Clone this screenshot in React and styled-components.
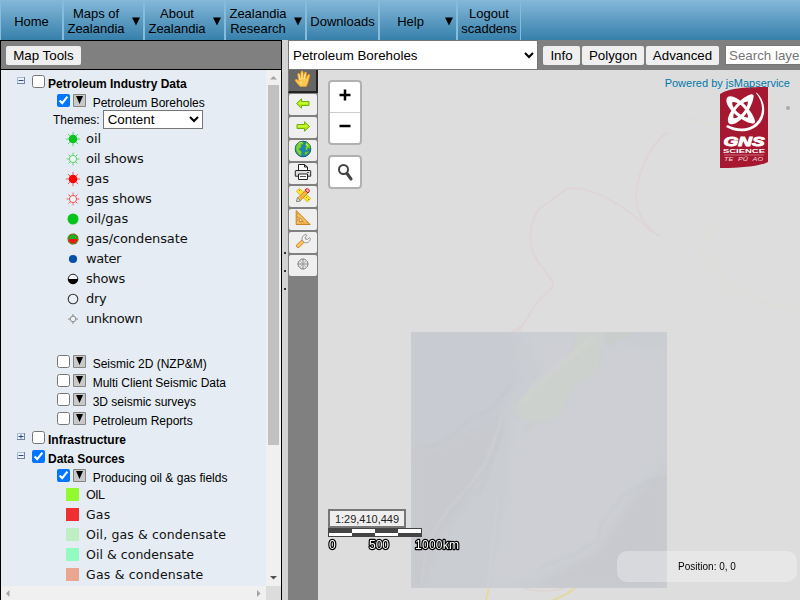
import React from "react";
import styled, { createGlobalStyle, css } from "styled-components";

const Global = createGlobalStyle`
  * { box-sizing: border-box; }
  body { margin: 0; overflow: hidden; font-family: "Liberation Sans", Arial, sans-serif; color: #000; }
`;

const Page = styled.div`
  width: 800px;
  height: 600px;
  display: flex;
  flex-direction: column;
  overflow: hidden;
`;
const Nav = styled.nav`
  height: 40px;
  flex: none;
  display: flex;
  background: linear-gradient(#85b8d9, #3680ab);
`;
const NavItem = styled.div`
  width: ${(p) => p.$w}px;
  height: 40px;
  display: flex;
  align-items: center;
  border: solid #85bcdc;
  border-width: 0 1px;
  padding: 2px 3px 0;
  font-size: 13px;
  line-height: 15px;
  text-align: center;
`;
const NavLabel = styled.span`
  flex: 1;
  white-space: nowrap;
`;
const NavArrow = styled.svg`
  flex: none;
  width: 8px;
  height: 9px;
  margin: 0 0.5px 0 6.5px;
`;
const Body = styled.div`
  flex: 1;
  display: flex;
  min-height: 0;
`;

const Side = styled.aside`
  width: 282px;
  flex: none;
  display: flex;
  flex-direction: column;
  border: solid #000;
  border-width: 1px 1px 0 1px;
  background: #e5ecf3;
`;
const SideBar = styled.div`
  height: 29px;
  flex: none;
  display: flex;
  align-items: center;
  padding-left: 5px;
  background: #808080;
  border-bottom: 1px solid #000;
`;
const Button = styled.button`
  width: ${(p) => p.$w}px;
  height: 19px;
  padding: 0;
  border: 0;
  border-radius: 2px;
  background: #efefef;
  font: 13.333px "Liberation Sans", Arial, sans-serif;
  white-space: nowrap;
`;
const TreeGrid = styled.div`
  flex: 1;
  min-height: 0;
  display: grid;
  grid-template-columns: 265px 15px;
  grid-template-rows: 516px 14px;
`;
const Tree = styled.div`
  padding-top: 3px;
  overflow: hidden;
`;
const Row = styled.div`
  height: 19px;
  display: flex;
  align-items: flex-start;
  padding: 2px 0 0 ${(p) => (p.$child ? 56 : 16)}px;
`;
const Check = styled.input.attrs({ type: "checkbox" })`
  width: 13px;
  height: 13px;
  margin: 0;
`;
const Expander = styled.svg`
  width: 8px;
  height: 8px;
  margin: 2px 7px 0 0;
`;
const Label = styled.span`
  font-size: 12px;
  line-height: 14px;
  white-space: nowrap;
  margin: 2px 0 0 ${(p) => (p.$bold ? 3 : 6.67)}px;
  font-weight: ${(p) => (p.$bold ? 700 : 400)};
`;
const DropIcon = styled.svg`
  width: 13px;
  height: 13px;
  margin-left: 3px;
`;
const Themes = styled.div`
  height: 19px;
  margin-top: -1px;
  padding-left: 52px;
  display: flex;
  align-items: center;
  gap: 3px;
  font-size: 12px;
`;
const ThemeSelect = styled.select`
  width: 100px;
  height: 19px;
  padding: 0;
  margin: 0;
  font: 13.333px "Liberation Sans", Arial, sans-serif;
  background: #fff;
  border: 1px solid #767676;
  border-radius: 0;
`;
const Legend = styled.div`
  padding-left: 62px;
  margin: ${(p) => p.$margin};
`;
const LegendRow = styled.div`
  height: 20px;
  display: flex;
  align-items: center;
  font: ${(p) => p.$size}px "DejaVu Sans", sans-serif;
  letter-spacing: ${(p) => p.$track}px;
  color: #111;
  white-space: nowrap;
`;
const LegendText = styled.span`
  padding-bottom: 2px;
`;
const Symbol = styled.svg`
  width: 20px;
  height: 20px;
  flex: none;
  margin-right: 3px;
`;
const Track = styled.div`
  display: flex;
  flex-direction: ${(p) => (p.$col ? "column" : "row")};
  align-items: center;
  justify-content: space-between;
  padding: ${(p) => (p.$col ? "4px 0 5px" : "0 4px 0 4px")};
  background: #f0f0f0;
`;
const Thumb = styled.div`
  width: 11px;
  height: 360px;
  margin: 4px 0 auto;
  background: #c1c1c1;
`;
const Tri = styled.svg`
  width: 7px;
  height: 7px;
  display: block;
  flex: none;
`;
const Corner = styled.div`
  background: #dcdcdc;
`;
const Splitter = styled.div`
  width: 6px;
  flex: none;
  display: flex;
  flex-direction: column;
  align-items: center;
  gap: 16px;
  padding-top: 212px;
  background: #d3d3d3;
`;
const Dot = styled.i`
  width: 2px;
  height: 2px;
  background: #333;
`;

const Main = styled.main`
  flex: 1;
  min-width: 0;
  display: flex;
  flex-direction: column;
`;
const TopBar = styled.div`
  height: 30px;
  flex: none;
  display: flex;
  align-items: center;
  background: #808080;
  overflow: hidden;
`;
const LayerSelect = styled.select`
  width: 250px;
  height: 30px;
  flex: none;
  margin: 0 5px 0 0;
  padding: 0;
  border: 1px solid #767676;
  border-radius: 0;
  background: #fff;
  font: 13.333px "Liberation Sans", Arial, sans-serif;
`;
const Buttons = styled.div`
  display: flex;
  gap: 2px;
  flex: none;
`;
const Search = styled.input`
  width: 160px;
  height: 20px;
  flex: none;
  margin-left: 6px;
  padding: 1px 3px;
  border: 1px solid #767676;
  font: 13.333px "Liberation Sans", Arial, sans-serif;
`;
const Work = styled.div`
  flex: 1;
  display: flex;
  min-height: 0;
`;
const Tools = styled.div`
  width: 30px;
  flex: none;
  display: flex;
  flex-direction: column;
  align-items: center;
  gap: 2px;
  background: #808080;
`;
const Tool = styled.div`
  width: 28px;
  height: 21px;
  display: flex;
  align-items: center;
  justify-content: center;
  padding-bottom: 3px;
  border-radius: 2px;
  background: #efefef;
  ${(p) =>
    p.$active &&
    css`
      width: 30px;
      height: 23px;
      background: #666;
      border: solid #222;
      border-width: 0 2px 2px 0;
      border-left: 1px solid #777;
      border-radius: 0;
      margin-bottom: -1px;
    `}
  svg { width: 18px; height: 18px; flex: none; }
`;
const Map = styled.div`
  flex: 1;
  position: relative;
  overflow: hidden;
  background: #ddd;
`;
const Terrain = styled.svg`
  position: absolute;
  inset: 0;
  width: 482px;
  height: 530px;
`;
const Control = styled.div`
  position: absolute;
  left: 10px;
  top: ${(p) => p.$top}px;
  width: 34px;
  border: 2px solid #b1b1b1;
  border-radius: 4px;
  background: #fff;
  display: flex;
  flex-direction: column;
`;
const ControlCell = styled.div`
  height: 30px;
  display: flex;
  align-items: center;
  justify-content: center;
  padding-bottom: ${(p) => p.$lift || 0}px;
  & + & { border-top: 1px solid #ccc; height: 31px; }
`;
const Powered = styled.div`
  position: absolute;
  right: 10px;
  top: 7px;
  font-size: 11px;
  line-height: 13px;
  color: #0078a8;
  white-space: nowrap;
  z-index: 1;
`;
const Logo = styled.svg`
  position: absolute;
  left: 402px;
  top: 17px;
  width: 48px;
  height: 81px;
`;
const ScaleBox = styled.div`
  position: absolute;
  left: 10px;
  top: 439px;
`;
const Ratio = styled.div`
  width: 78px;
  height: 19px;
  border: 2px solid #777;
  background: #eee;
  font-size: 11px;
  line-height: 16px;
  text-align: center;
  color: #222;
`;
const ScaleBar = styled.svg`
  display: block;
  width: 150px;
  height: 28px;
`;
const Position = styled.div`
  position: absolute;
  left: 299px;
  top: 481px;
  width: 180px;
  height: 31px;
  border-radius: 10px;
  background: rgba(255, 255, 255, 0.3);
  font-size: 10px;
  line-height: 31px;
  text-align: center;
`;

const NAV = [
  [["Home"], 63, false],
  [["Maps of", "Zealandia"], 81, true],
  [["About", "Zealandia"], 81, true],
  [["Zealandia", "Research"], 81, true],
  [["Downloads"], 73, false],
  [["Help"], 78, true],
  [["Logout", "scaddens"], 64, false],
];

const rays = (r1, r2) =>
  [0, 45, 90, 135, 180, 225, 270, 315].map((a) => {
    const c = Math.cos((a * Math.PI) / 180);
    const s = Math.sin((a * Math.PI) / 180);
    return `M${10 + r1 * c} ${10 + r1 * s}L${10 + r2 * c} ${10 + r2 * s}`;
  }).join("");

const sun = (color, filled) => (
  <>
    <path d={rays(4.2, filled ? 7.2 : 6.4)} stroke={color} strokeWidth="1" opacity=".6" />
    <circle cx="10" cy="10" r={filled ? 4.3 : 3.6} fill={filled ? color : "#eef3f4"} stroke={color} strokeWidth={filled ? 0 : 0.9} strokeOpacity=".75" />
  </>
);

const WELLS = [
  ["oil", sun("#04c41d", true), -0.05],
  ["oil shows", sun("#04c41d", false), -0.25],
  ["gas", sun("#ff0000", true), 0],
  ["gas shows", sun("#ff0000", false), -0.2],
  ["oil/gas", <circle cx="10" cy="10" r="5.5" fill="#04c41d" />, -0.05],
  ["gas/condensate", <>
    <circle cx="10" cy="10" r="4.9" fill="#18b51d" />
    <path d="M5.5 10h9a4.5 4.5 0 0 1-9 0z" fill="#f51414" />
    <circle cx="10" cy="10" r="4.9" fill="none" stroke="#2c9c1c" strokeWidth="1.2" />
    <circle cx="10" cy="10" r="4.9" fill="none" stroke="#e83616" strokeWidth="1.1" strokeDasharray="1.9 1.95" />
  </>, -0.1],
  ["water", <circle cx="10" cy="10" r="4.1" fill="#0450ac" />, -0.4],
  ["shows", <>
    <circle cx="10" cy="10" r="4.8" fill="#f3f5f7" stroke="#222" />
    <path d="M5 10h10a5 5 0 0 1-10 0z" />
  </>, -0.3],
  ["dry", <circle cx="10" cy="10" r="4.8" fill="#eaf0f5" stroke="#333" strokeWidth="1.1" />, -0.3],
  ["unknown", <>
    <path d={"M10 5v2.5M10 12.5V15M5 10h2.5M12.5 10H15"} stroke="#888" />
    <circle cx="10" cy="10" r="2.8" fill="#eef2f6" stroke="#888" />
  </>, -0.4],
];
const FIELDS = [
  ["OIL", "#91fb30", -0.9],
  ["Gas", "#ef2f31", 0.15],
  ["Oil, gas & condensate", "#c0eec3", 0.13],
  ["Oil & condensate", "#93fbc1", 0.05],
  ["Gas & condensate", "#e9a792", 0.2],
];

const Toggle = ({ plus }) => (
  <Expander viewBox="0 0 8 8">
    <path d="M.5.5h7v6h-7z" fill="#eaf1fa" stroke="#a9b8cf" />
    <path d={plus ? "M1.5 3.5h5M4 1.5v4" : "M1.5 3.5h5"} stroke="#294b80" />
    <path d="M0 6.5h8M7.5 0v7" stroke="#7183a5" />
  </Expander>
);
const Group = ({ label, plus, checked }) => (
  <Row>
    <Toggle plus={plus} />
    <Check defaultChecked={checked} />
    <Label $bold>{label}</Label>
  </Row>
);
const Layer = ({ label, checked }) => (
  <Row $child>
    <Check defaultChecked={checked} />
    <DropIcon viewBox="0 0 13 13">
      <path d="M.5.5h12v12H.5z" fill="#c9c9c9" stroke="#858585" />
      <path d="M2.6 2h2l2 7z" fill="#c68442" />
      <path d="M10.4 2h-2l-2 7z" fill="#507da8" />
      <path d="M3.2 2h6.6L6.5 10z" />
    </DropIcon>
    <Label>{label}</Label>
  </Row>
);

const ARROW = "M2.5 9.5l5-4.7v2.7H15v4H7.5v2.7z";
const TOOL_ICONS = [
  <svg viewBox="0 0 18 18"><path d="M6 16.500L1.400 11c-.8-1.300.8-2.200 1.900-1.300l1.700 1.400-1.300-6.600c-.1-1.500 1.700-1.700 2-.4l1 4L7 1.900C7.100.6 9 .6 9.100 1.900l.2 5.700 1.300-5c.4-1.200 2-.8 1.900.4l-.7 5.500 2.100-3.600c.7-1.100 2.300-.3 1.800.9-1 2.700-1.100 6.700-3.400 10.700z" fill="#ffc84e" stroke="#f39b22" strokeWidth=".7" /><path d="M5 5l1 5M8 3v6M11 4l-.8 5M6 12l2 2" stroke="#fff0b7" strokeWidth=".9" /></svg>,
  <svg viewBox="0 0 18 18"><path d={ARROW} fill="#b4ee10" stroke="#6fae12" /><path d="M5 9h9" stroke="#d8ff55" /></svg>,
  <svg viewBox="0 0 18 18"><g transform="translate(18 0) scale(-1 1)"><path d={ARROW} fill="#b4ee10" stroke="#6fae12" /><path d="M5 9h9" stroke="#d8ff55" /></g></svg>,
  <svg viewBox="0 0 18 18"><circle cx="9" cy="9" r="7.8" fill="#1c81c5" stroke="#145a8b" /><path d="M2 6c2-4 5-5 7-4l1 2-3 1 1 2-3 2 3 3-1 4C3 14 1 10 2 6zM12 2c3 1 5 4 4 7l-2-1-1 3-2-2 1-3-1-1zM11 12l4-1c-1 3-3 4-5 4z" fill="#78d33b" stroke="#348c24" strokeWidth=".6" /><path d="M5 3.5c1-1 2-1 3-1M12 4l2 2" stroke="#d9f66a" /></svg>,
  <svg viewBox="0 0 18 18"><path d="M4.5 7V1.5h6L13.5 4v3M10.5 1.5V4h3" fill="#fff" stroke="#222" /><path d="M2 7.5h14a.7.7 0 0 1 .7.7v5H1.3v-5a.7.7 0 0 1 .7-.7z" fill="#ddd" stroke="#222" /><path d="M4.5 11h9v5.5h-9z" fill="#fff" stroke="#222" /><path d="M6 13.5h6M13 9.5h2" stroke="#555" /></svg>,
  <svg viewBox="0 0 18 18"><path d="M2.5 5.5l2.5-3 3.500 2.500 8 7.500-3 3.500-4-4z" fill="#ffe92a" stroke="#cba800" strokeWidth=".7" /><path d="M5 5l1-1m6 8l1-1m1 3l1-1" stroke="#a98500" /><path d="M2.500 15.500l1-3.500 8-7.500 2.500 2.500-8 8z" fill="#f5b43f" stroke="#b47c22" strokeWidth=".7" /><path d="M2.500 15.500l1-4 3 3.500z" fill="#eee" stroke="#777" strokeWidth=".8" /><path d="M11 4.300l1-1.400c2-.9 4 .9 3.200 2.700L14 7z" fill="#faa" stroke="#d31222" /></svg>,
  <svg viewBox="0 0 18 18"><path d="M2.200 1.500v14h14z M5.200 8.500v4h4z" fill="#f7bd5b" fillRule="evenodd" stroke="#c98327" /><path d="M3 5h1M3 8h1M3 11h1M7 14.500v-1M10 14.500v-1M13 14.500v-1" stroke="#996018" strokeWidth=".7" /></svg>,
  <svg viewBox="0 0 18 18"><path d="M2.500 13L8 8l2.200 2.200L5 15.500c-1.500.6-3.200-1-2.500-2.500z" fill="#ffc45d" stroke="#bc8026" strokeWidth=".9" /><path d="M8.300 8.500C7.500 5.500 9 2.700 12.300 2.500l.7 1-1.800 1.600.3 2 2 .3 1.900-1.900.9 1c-.1 3.100-2.800 4.800-5.600 4.100z" fill="#f2f2f2" stroke="#888" strokeWidth=".9" /></svg>,
  <svg viewBox="0 0 18 18"><circle cx="9" cy="9" r="5" fill="#e2e2e2" stroke="#888" /><path d="M9 3.500v11M3.500 9h11" stroke="#888" strokeWidth=".9" /><path d="M5.500 5.500l7 7M12.500 5.500l-7 7" stroke="#aaa" strokeWidth=".6" /></svg>,
];

const SEABED = [
  "M0 256V118L40 108 84 80 94 92 64 157 30 205 12 256z",
  "M256 142l-35 18-12 17-19 21-4 19-32 22-30 17h132z",
];

/* Lens-shaped ring, thick at its two tips. */
const ORBIT = "M-18 0C-17-9 9-8 18-1.5 20 0 20 1.5 18 2.5 8 9-16 9-18 0zM-11 0C-8 5 5 5 11 1 6-5-8-5-11 0z";

export default function App() {
  return (
    <Page>
      <Global />
      <Nav>
        {NAV.map(([lines, w, menu], i) => (
          <NavItem key={i} $w={w}>
            <NavLabel>
              {lines.map((l) => <div key={l}>{l}</div>)}
            </NavLabel>
            {menu && <NavArrow viewBox="0 0 8 9"><path d="M0 .5h8L4 8.5z" /></NavArrow>}
          </NavItem>
        ))}
      </Nav>
      <Body>
        <Side>
          <SideBar><Button $w={75}>Map Tools</Button></SideBar>
          <TreeGrid>
            <Tree>
              <Group label="Petroleum Industry Data" />
              <Layer label="Petroleum Boreholes" checked />
              <Themes>Themes: <ThemeSelect><option>Content</option></ThemeSelect></Themes>
              <Legend $margin="0 0 24px">
                {WELLS.map(([name, icon, track]) => (
                  <LegendRow key={name} $size={13} $track={track}>
                    <Symbol viewBox="0 0 20 20">{icon}</Symbol><LegendText>{name}</LegendText>
                  </LegendRow>
                ))}
              </Legend>
              <Layer label="Seismic 2D (NZP&M)" />
              <Layer label="Multi Client Seismic Data" />
              <Layer label="3D seismic surveys" />
              <Layer label="Petroleum Reports" />
              <Group label="Infrastructure" plus />
              <Group label="Data Sources" checked />
              <Layer label="Producing oil & gas fields" checked />
              <Legend $margin="-1px 0 0">
                {FIELDS.map(([name, color, track]) => (
                  <LegendRow key={name} $size={12.5} $track={track}>
                    <Symbol viewBox="0 0 20 20"><path d="M3 3h13v13H3z" fill={color} /></Symbol><LegendText>{name}</LegendText>
                  </LegendRow>
                ))}
              </Legend>
            </Tree>
            <Track $col>
              <Tri viewBox="0 0 7 7"><path d="M0 5.5L3.5 2 7 5.5z" fill="#a3a3a3" /></Tri>
              <Thumb />
              <Tri viewBox="0 0 7 7"><path d="M0 2h7L3.5 5.5z" fill="#505050" /></Tri>
            </Track>
            <Track>
              <Tri viewBox="0 0 7 7"><path d="M4.5 0v7L1 3.5z" fill="#a3a3a3" /></Tri>
              <Tri viewBox="0 0 7 7"><path d="M2 0v7l3.5-3.5z" fill="#a3a3a3" /></Tri>
            </Track>
            <Corner />
          </TreeGrid>
        </Side>
        <Splitter><Dot /><Dot /><Dot /></Splitter>
        <Main>
          <TopBar>
            <LayerSelect><option>Petroleum Boreholes</option></LayerSelect>
            <Buttons>
              <Button $w={37}>Info</Button>
              <Button $w={62}>Polygon</Button>
              <Button $w={73}>Advanced</Button>
            </Buttons>
            <Search placeholder="Search layers" />
          </TopBar>
          <Work>
            <Tools>
              {TOOL_ICONS.map((icon, i) => <Tool key={i} $active={i === 0}>{icon}</Tool>)}
            </Tools>
            <Map>
              <Terrain viewBox="318 70 482 530" fill="none">
                <defs>
                  <filter id="soft"><feGaussianBlur stdDeviation="5" /></filter>
                  <filter id="edge"><feGaussianBlur stdDeviation="0.8" /></filter>
                  <clipPath id="tile"><path d="M0 0h256v256H0z" /></clipPath>
                </defs>
                <g stroke="#dfd5d6" strokeWidth="2">
                  <path d="M667 132c-17 13-31 43-31 66 0 18 15 33 23 38M660 235c-9 0-20-18-43-31-19-12-38-18-50-15l-29 21c-10 18-10 36 0 52l15 20c1 8-9 10-19 25l-13 21-7 6M512 332c7-3 10-6 14-12" />
                  <path d="M522 588c15 4 29 4 43 0" />
                </g>
                <path d="M679 118c15 0 25 5 41 7M734 170c-2 23-8 40-16 53-22 20-20 42 3 44l1 16c9 10 8 5 30 15 16 11 30 1 48 12" stroke="#dddcd5" strokeWidth="1.5" />
                <path d="M489 588l-3 12M575 588c-8 7-14 9-22 12" stroke="#e5d8a0" strokeWidth="2" />
                <g transform="translate(411 332)" clipPath="url(#tile)">
                  <path d="M0 0h256v256H0z" fill="#cacdd2" />
                  <g filter="url(#soft)">
                    {SEABED.map((d) => <path key={d} d={d} fill="#c7c9ce" />)}
                    <path d="M110 0h60l86 20v100l-40 55-30 45-90 36H75l20-80 9-100 30-37z" fill="#cdd0d5" opacity=".8" />
                    <path d="M0 0h100l10 50-35 48L0 112z" fill="#c8cad0" opacity=".7" />
                  </g>
                  <g filter="url(#edge)">
                    <path d="M165 0c1 15-8 28-14 34l-25 18c-12 10-24 22-23 29 7 5 16 8 24 8 14 1 25-5 27-16 2-10 9-20 17-23 8-4 13-7 17-15-2-8 4-23 6-35z" fill="#cdd1cd" stroke="#c9cdcb" strokeWidth=".7" />
                    <path d="M114 69l10-16 14-10 22-19 22-18" stroke="#d4d4d0" strokeWidth="5" opacity=".4" />
                    <path d="M200 0h24l-8 7-9 0-6 8-6-3zM113 98l7-9 3 4-5 6z" fill="#c9cdcb" />
                    <path d="M11 254c1-50 20-70 39-91 24-27 31-42 41-80M87 165c-4 30-7 55-10 90" stroke="#d1d3d6" strokeWidth="1.5" opacity=".75" />
                    <path d="M0 118c25-4 39-9 55-28l25-13 20-24M130 235l33-13 23-13 5-18 19-26 24-15 22-5M66 163l8-14 18-55" stroke="#c1c4c8" strokeWidth="1.2" opacity=".6" />
                  </g>
                </g>
                <circle cx="788" cy="108" r="2" fill="#aaa" />
              </Terrain>
              <Control $top={10}>
                <ControlCell $lift={5}><svg width="12" height="12" viewBox="0 0 12 12"><path d="M6 .5v11M.5 6h11" stroke="#000" strokeWidth="2.5" /></svg></ControlCell>
                <ControlCell><svg width="12" height="8" viewBox="0 0 12 8"><path d="M.5 2h11" stroke="#000" strokeWidth="2.5" /></svg></ControlCell>
              </Control>
              <Control $top={85}>
                <ControlCell><svg width="18" height="18" viewBox="0 0 18 18" fill="none" stroke="#444"><circle cx="7.5" cy="6.5" r="4.5" strokeWidth="2" /><path d="M11 10.5l4 5.5" strokeWidth="3" strokeLinecap="round" /></svg></ControlCell>
              </Control>
              <Powered>Powered by jsMapservice</Powered>
              <Logo viewBox="0 0 48 81" fontFamily="Liberation Sans, sans-serif">
                <path d="M0 7C8 2 20 0 48 0v75c-9 4-23 6-48 6z" fill="#a51830" />
                <g fill="#fff" fillRule="evenodd">
                  <path d={ORBIT} transform="translate(20.5 22.5) rotate(42)" />
                  <path d={ORBIT} transform="translate(20.5 22.5) rotate(-52)" />
                  <path d="M36.5 5.5C46 14 47 29 38 38 30 46 16 46 6 40l1.500-2C17 43 29 43 36 36c8-8 8-20 0-30z" />
                </g>
                <text x="3.5" y="58.5" fontSize="13" fontWeight="700" fontStyle="italic" fill="#fff" stroke="#fff" strokeWidth=".9" textLength="41" lengthAdjust="spacingAndGlyphs">GNS</text>
                <text x="3" y="66" fontSize="6.2" fontWeight="700" fill="#fff" textLength="42" lengthAdjust="spacingAndGlyphs">SCIENCE</text>
                <path d="M4 68h40" stroke="#d98c98" strokeWidth=".7" />
                <text x="4" y="74" fontSize="5" fontStyle="italic" fill="#f3d5da" textLength="39" lengthAdjust="spacingAndGlyphs" wordSpacing="2">TE PŪ AO</text>
              </Logo>
              <ScaleBox>
                <Ratio>1:29,410,449</Ratio>
                <ScaleBar viewBox="0 0 150 28">
                  <path d="M0 0h94v9H0z" fill="#444" />
                  <path d="M24 1h23v4H24zM70 1h23v4H70zM1 5h23v3H1zM47 5h23v3H47z" fill="#fff" />
                  <g fontFamily="Liberation Sans, sans-serif" fontSize="12" fill="#fff" stroke="#000" strokeWidth="2.4" strokeLinejoin="round" paintOrder="stroke">
                    <text x="1" y="21">0</text><text x="41" y="21">500</text><text x="87" y="21" textLength="44">1000km</text>
                  </g>
                </ScaleBar>
              </ScaleBox>
              <Position>Position: 0, 0</Position>
            </Map>
          </Work>
        </Main>
      </Body>
    </Page>
  );
}
